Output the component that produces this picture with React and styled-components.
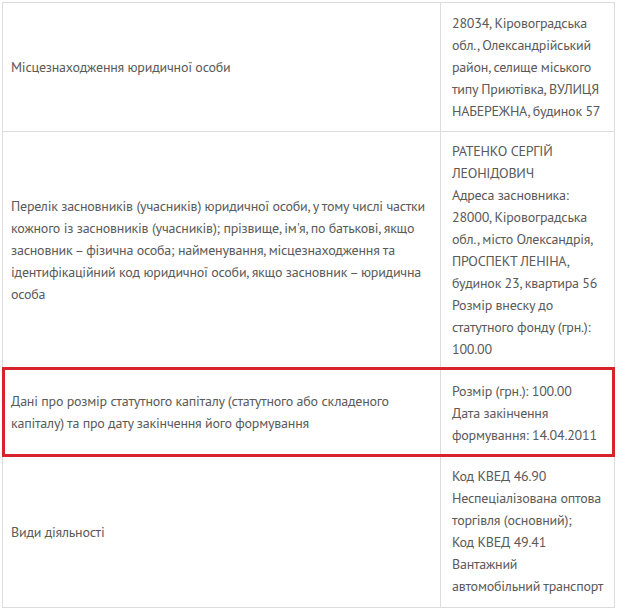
import React from 'react';
import styled, { createGlobalStyle } from 'styled-components';

const GlobalStyle = createGlobalStyle`
  body {
    margin: 0;
    background: #ffffff;
    font-family: "PT Sans", Roboto, "Liberation Sans", sans-serif;
  }
`;

const Page = styled.div`
  padding: 2px 0 0 2px;
  width: 617px;
  box-sizing: border-box;
`;

const Table = styled.div`
  width: 613px;
  border-top: 1px solid #dcdcdc;
  border-left: 1px solid #dcdcdc;
  box-sizing: border-box;
`;

const Row = styled.div`
  position: relative;
  display: grid;
  grid-template-columns: 438px 174px;

  ${props => props.highlighted && `
    &::after {
      content: '';
      position: absolute;
      top: -1px;
      left: -1px;
      right: 0;
      bottom: 0;
      border: 3px solid #d7232e;
      pointer-events: none;
    }
  `}
`;

const Cell = styled.div`
  display: flex;
  flex-direction: column;
  justify-content: center;
  box-sizing: border-box;
  padding: ${props => props.pad || '9px 10px 9px 10px'};
  border-right: 1px solid #dcdcdc;
  border-bottom: 1px solid #dcdcdc;
  font-size: 14px;
  line-height: 22px;
  letter-spacing: -0.22px;
  color: #5a5a5a;
`;

const Label = styled(Cell)`
  padding-left: 8px;
  padding-right: 10px;
`;

const Line = styled.span`
  display: block;
  white-space: nowrap;
`;

const rows = [
  {
    pad: '9px 10px 9px 11px',
    label: ['Місцезнаходження юридичної особи'],
    value: [
      '28034, Кіровоградська',
      'обл., Олександрійський',
      'район, селище міського',
      'типу Приютівка, ВУЛИЦЯ',
      'НАБЕРЕЖНА, будинок 57'
    ]
  },
  {
    pad: '8px 10px 7px 11px',
    label: [
      'Перелік засновників (учасників) юридичної особи, у тому числі частки',
      'кожного із засновників (учасників); прізвище, ім\'я, по батькові, якщо',
      'засновник – фізична особа; найменування, місцезнаходження та',
      'ідентифікаційний код юридичної особи, якщо засновник – юридична',
      'особа'
    ],
    value: [
      'РАТЕНКО СЕРГІЙ',
      'ЛЕОНІДОВИЧ',
      'Адреса засновника:',
      '28000, Кіровоградська',
      'обл., місто Олександрія,',
      'ПРОСПЕКТ ЛЕНІНА,',
      'будинок 23, квартира 56',
      'Розмір внеску до',
      'статутного фонду (грн.):',
      '100.00'
    ]
  },
  {
    pad: '12px 10px 10px 11px',
    highlighted: true,
    label: [
      'Дані про розмір статутного капіталу (статутного або складеного',
      'капіталу) та про дату закінчення його формування'
    ],
    value: [
      'Розмір (грн.): 100.00',
      'Дата закінчення',
      'формування: 14.04.2011'
    ]
  },
  {
    pad: '8px 10px 10px 11px',
    label: ['Види діяльності'],
    value: [
      'Код КВЕД 46.90',
      'Неспеціалізована оптова',
      'торгівля (основний);',
      'Код КВЕД 49.41',
      'Вантажний',
      'автомобільний транспорт'
    ]
  }
];

const App = () => {
  return (
    <Page>
      <GlobalStyle />
      <Table>
        {rows.map((row, i) => (
          <Row key={i} highlighted={row.highlighted}>
            <Label>
              {row.label.map((text, j) => <Line key={j}>{text}</Line>)}
            </Label>
            <Cell pad={row.pad}>
              {row.value.map((text, j) => <Line key={j}>{text}</Line>)}
            </Cell>
          </Row>
        ))}
      </Table>
    </Page>
  );
};

export default App;
